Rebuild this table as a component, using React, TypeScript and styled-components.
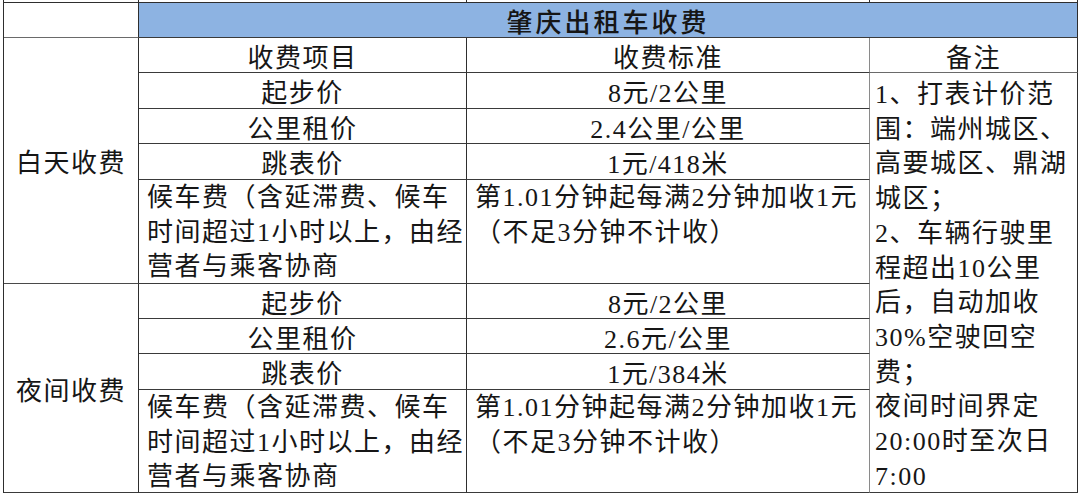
import React from "react";
import styled, { createGlobalStyle } from "styled-components";

const GlobalStyle = createGlobalStyle`
  html, body {
    margin: 0;
    padding: 0;
    background: #ffffff;
  }
  body {
    font-family: "Liberation Serif", "Noto Sans CJK SC", serif;
    color: #161616;
  }
`;

const Page = styled.div`
  width: 1080px;
  height: 493px;
  overflow: hidden;
  padding-left: 3px;
  box-sizing: border-box;
  background: #ffffff;
`;

const Sheet = styled.div`
  display: grid;
  grid-template-columns: 135px 328px 403px 208px;
  grid-template-rows: 3px 35px 35px 36px 35px 36px 104px 35px 35px 36px 103px;
  border-left: 1px solid #2e2e2e;
  width: 1075px;
  font-size: 26px;
  letter-spacing: 1.5px;
`;

type CellProps = {
  $col: string;
  $row: string;
  $bg?: string;
  $right?: string;
  $bottom?: string;
  $bold?: boolean;
};

const Cell = styled.div<CellProps>`
  grid-column: ${(p) => p.$col};
  grid-row: ${(p) => p.$row};
  box-sizing: border-box;
  display: flex;
  align-items: center;
  justify-content: center;
  overflow: hidden;
  white-space: nowrap;
  background: ${(p) => p.$bg ?? "#ffffff"};
  border-right: 1px solid ${(p) => p.$right ?? "#2e2e2e"};
  border-bottom: 1px solid ${(p) => p.$bottom ?? "#3a3a3a"};
  font-weight: ${(p) => (p.$bold ? 500 : 400)};
  letter-spacing: ${(p) => (p.$bold ? "3px" : "1.5px")};
`;

const LinesCell = styled.div<CellProps & { $padTop: number; $padLeft: number; $lh: number }>`
  grid-column: ${(p) => p.$col};
  grid-row: ${(p) => p.$row};
  box-sizing: border-box;
  display: flex;
  flex-direction: column;
  overflow: hidden;
  white-space: nowrap;
  background: #ffffff;
  border-right: 1px solid ${(p) => p.$right ?? "#2e2e2e"};
  border-bottom: 1px solid ${(p) => p.$bottom ?? "#3a3a3a"};
  padding: ${(p) => p.$padTop}px 0 0 ${(p) => p.$padLeft}px;
  line-height: ${(p) => p.$lh}px;
`;

const Line = styled.span`
  display: block;
  flex-shrink: 0;
`;

const Stub = styled.div<{ $col: string }>`
  grid-column: ${(p) => p.$col};
  grid-row: 1;
  box-sizing: border-box;
  border-right: 1px solid #2e2e2e;
  border-bottom: 1px solid #2e2e2e;
`;

const waitLines = ["候车费（含延滞费、候车", "时间超过1小时以上，由经", "营者与乘客协商"];
const waitRule = ["第1.01分钟起每满2分钟加收1元", "（不足3分钟不计收）"];
const remarks = [
  "1、打表计价范",
  "围：端州城区、",
  "高要城区、鼎湖",
  "城区；",
  "2、车辆行驶里",
  "程超出10公里",
  "后，自动加收",
  "30%空驶回空",
  "费；",
  "夜间时间界定",
  "20:00时至次日",
  "7:00",
];

type Block = {
  label: string;
  startRow: number;
  rows: { item: string; price: string }[];
};

const blocks: Block[] = [
  {
    label: "白天收费",
    startRow: 4,
    rows: [
      { item: "起步价", price: "8元/2公里" },
      { item: "公里租价", price: "2.4公里/公里" },
      { item: "跳表价", price: "1元/418米" },
    ],
  },
  {
    label: "夜间收费",
    startRow: 8,
    rows: [
      { item: "起步价", price: "8元/2公里" },
      { item: "公里租价", price: "2.6元/公里" },
      { item: "跳表价", price: "1元/384米" },
    ],
  },
];

const GRAY = "#8a8a8a";

export default function App() {
  return (
    <Page>
      <GlobalStyle />
      <Sheet>
        <Stub $col="1" />
        <Stub $col="2" />
        <Stub $col="3" />
        <Stub $col="4" />

        <Cell $col="1" $row="2" $bottom="#6a6a6a" />
        <Cell $col="2 / 5" $row="2" $bg="#8db3e2" $bold>
          肇庆出租车收费
        </Cell>

        <Cell $col="1" $row="3 / 8" $bottom="#4a4a4a">
          白天收费
        </Cell>
        <Cell $col="2" $row="3">收费项目</Cell>
        <Cell $col="3" $row="3" $right={GRAY}>
          收费标准
        </Cell>
        <Cell $col="4" $row="3" $bottom="#6a6a6a">
          备注
        </Cell>

        <LinesCell $col="4" $row="4 / 12" $padTop={5} $padLeft={5} $lh={34.7}>
          {remarks.map((r) => (
            <Line key={r}>{r}</Line>
          ))}
        </LinesCell>

        <Cell $col="1" $row="8 / 12">
          夜间收费
        </Cell>

        {blocks.map((b) => (
          <React.Fragment key={b.label}>
            {b.rows.map((r, i) => (
              <React.Fragment key={r.item}>
                <Cell $col="2" $row={String(b.startRow + i)}>
                  {r.item}
                </Cell>
                <Cell $col="3" $row={String(b.startRow + i)} $right={GRAY}>
                  {r.price}
                </Cell>
              </React.Fragment>
            ))}
            <LinesCell
              $col="2"
              $row={String(b.startRow + 3)}
              $padTop={1}
              $padLeft={8}
              $lh={34.5}
            >
              {waitLines.map((l) => (
                <Line key={l}>{l}</Line>
              ))}
            </LinesCell>
            <LinesCell
              $col="3"
              $row={String(b.startRow + 3)}
              $padTop={1}
              $padLeft={8}
              $lh={34.5}
              $right={GRAY}
            >
              {waitRule.map((l) => (
                <Line key={l}>{l}</Line>
              ))}
            </LinesCell>
          </React.Fragment>
        ))}
      </Sheet>
    </Page>
  );
}
